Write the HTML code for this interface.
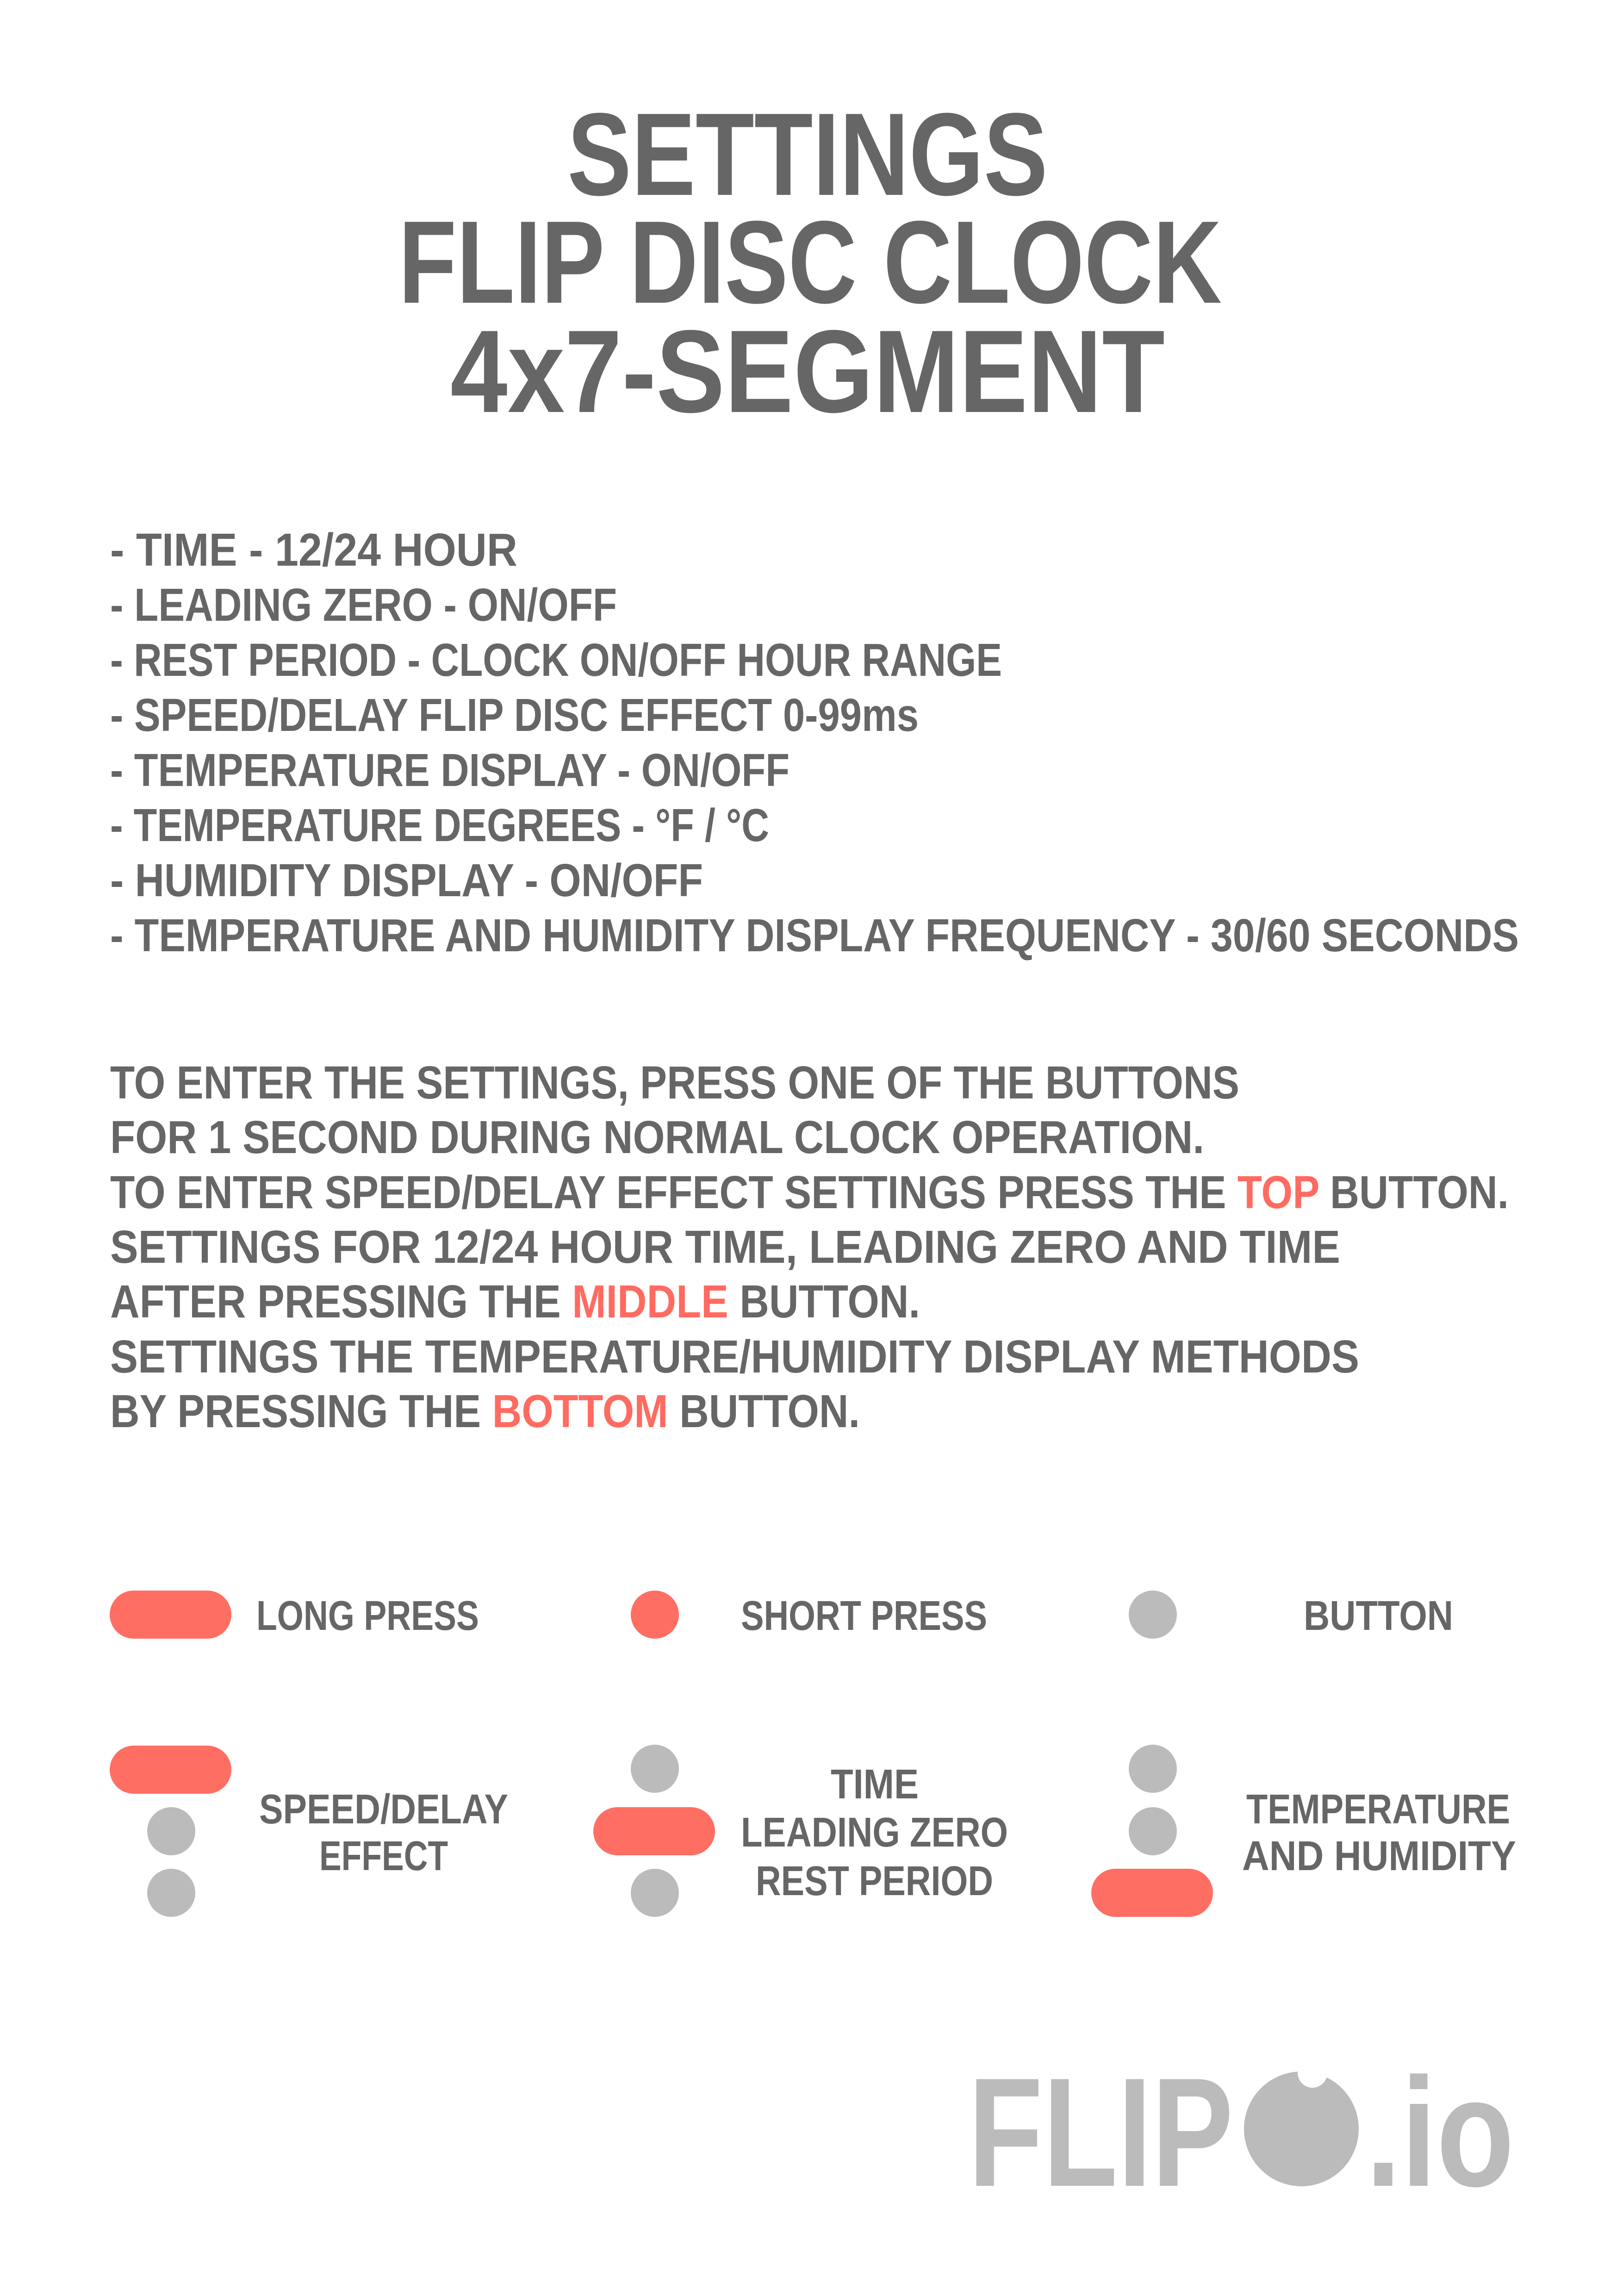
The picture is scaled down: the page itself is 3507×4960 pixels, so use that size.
<!DOCTYPE html>
<html><head><meta charset="utf-8"><style>html,body{margin:0;padding:0;background:#fff}svg{display:block}</style></head>
<body>
<svg xmlns="http://www.w3.org/2000/svg" width="3507" height="4960" viewBox="0 0 3507 4960">
<rect width="3507" height="4960" fill="#fff"/>
<g font-family="Liberation Sans, sans-serif" font-weight="bold" fill="#666666">
<text x="1226" y="421" font-size="254" textLength="1038" lengthAdjust="spacingAndGlyphs">SETTINGS</text>
<text x="861" y="654" font-size="254" textLength="1779" lengthAdjust="spacingAndGlyphs">FLIP DISC CLOCK</text>
<text x="973" y="890" font-size="254" textLength="1544" lengthAdjust="spacingAndGlyphs">4x7-SEGMENT</text>

<g font-size="100">
<text x="238" y="1222" textLength="880" lengthAdjust="spacingAndGlyphs">- TIME - 12/24 HOUR</text>
<text x="238" y="1341" textLength="1095" lengthAdjust="spacingAndGlyphs">- LEADING ZERO - ON/OFF</text>
<text x="238" y="1460" textLength="1927" lengthAdjust="spacingAndGlyphs">- REST PERIOD - CLOCK ON/OFF HOUR RANGE</text>
<text x="238" y="1579" textLength="1747" lengthAdjust="spacingAndGlyphs">- SPEED/DELAY FLIP DISC EFFECT 0-99ms</text>
<text x="238" y="1698" textLength="1468" lengthAdjust="spacingAndGlyphs">- TEMPERATURE DISPLAY - ON/OFF</text>
<text x="238" y="1817" textLength="1424" lengthAdjust="spacingAndGlyphs">- TEMPERATURE DEGREES - °F / °C</text>
<text x="238" y="1936" textLength="1281" lengthAdjust="spacingAndGlyphs">- HUMIDITY DISPLAY - ON/OFF</text>
<text x="238" y="2055" textLength="3044" lengthAdjust="spacingAndGlyphs">- TEMPERATURE AND HUMIDITY DISPLAY FREQUENCY - 30/60 SECONDS</text>

<text x="238" y="2373" textLength="2440" lengthAdjust="spacingAndGlyphs">TO ENTER THE SETTINGS, PRESS ONE OF THE BUTTONS</text>
<text x="238" y="2491" textLength="2364" lengthAdjust="spacingAndGlyphs">FOR 1 SECOND DURING NORMAL CLOCK OPERATION.</text>
<text x="238" y="2610" textLength="3022" lengthAdjust="spacingAndGlyphs">TO ENTER SPEED/DELAY EFFECT SETTINGS PRESS THE <tspan fill="#FF6B61">TOP</tspan> BUTTON.</text>
<text x="238" y="2728" textLength="2658" lengthAdjust="spacingAndGlyphs">SETTINGS FOR 12/24 HOUR TIME, LEADING ZERO AND TIME</text>
<text x="238" y="2846" textLength="1750" lengthAdjust="spacingAndGlyphs">AFTER PRESSING THE <tspan fill="#FF6B61">MIDDLE</tspan> BUTTON.</text>
<text x="238" y="2965" textLength="2699" lengthAdjust="spacingAndGlyphs">SETTINGS THE TEMPERATURE/HUMIDITY DISPLAY METHODS</text>
<text x="238" y="3083" textLength="1620" lengthAdjust="spacingAndGlyphs">BY PRESSING THE <tspan fill="#FF6B61">BOTTOM</tspan> BUTTON.</text>
</g>

<g font-size="90">
<text x="554" y="3521" textLength="481" lengthAdjust="spacingAndGlyphs">LONG PRESS</text>
<text x="1601" y="3521" textLength="532" lengthAdjust="spacingAndGlyphs">SHORT PRESS</text>
<text x="2817" y="3521" textLength="323" lengthAdjust="spacingAndGlyphs">BUTTON</text>
<text x="560" y="3939" textLength="538" lengthAdjust="spacingAndGlyphs">SPEED/DELAY</text>
<text x="690" y="4040" textLength="278" lengthAdjust="spacingAndGlyphs">EFFECT</text>
<text x="1795" y="3885" textLength="190" lengthAdjust="spacingAndGlyphs">TIME</text>
<text x="1601" y="3989" textLength="577" lengthAdjust="spacingAndGlyphs">LEADING ZERO</text>
<text x="1633" y="4094" textLength="513" lengthAdjust="spacingAndGlyphs">REST PERIOD</text>
<text x="2693" y="3939" textLength="570" lengthAdjust="spacingAndGlyphs">TEMPERATURE</text>
<text x="2684" y="4040" textLength="592" lengthAdjust="spacingAndGlyphs">AND HUMIDITY</text>
</g>
</g>

<!-- legend shapes -->
<rect x="237" y="3436" width="263" height="104" rx="52" fill="#FF6E63"/>
<circle cx="1415" cy="3488" r="52" fill="#FF6E63"/>
<circle cx="2491" cy="3488" r="52" fill="#BBBBBB"/>

<rect x="237" y="3771" width="263" height="104" rx="52" fill="#FF6E63"/>
<circle cx="370" cy="3956" r="52" fill="#BBBBBB"/>
<circle cx="370" cy="4089" r="52" fill="#BBBBBB"/>

<circle cx="1415" cy="3821" r="52" fill="#BBBBBB"/>
<rect x="1282" y="3904" width="263" height="104" rx="52" fill="#FF6E63"/>
<circle cx="1415" cy="4089" r="52" fill="#BBBBBB"/>

<circle cx="2491" cy="3821" r="52" fill="#BBBBBB"/>
<circle cx="2491" cy="3956" r="52" fill="#BBBBBB"/>
<rect x="2358" y="4037" width="263" height="104" rx="52" fill="#FF6E63"/>

<!-- logo -->
<g fill="#BBBBBB" font-family="Liberation Sans, sans-serif" font-weight="bold" font-size="335">
<text x="2092" y="4722" textLength="573" lengthAdjust="spacingAndGlyphs">FLIP</text>
<text x="2951" y="4722" textLength="321" lengthAdjust="spacingAndGlyphs">.io</text>
</g>
<circle cx="2812" cy="4599" r="124" fill="#BBBBBB"/>
<circle cx="2836" cy="4478" r="32" fill="#fff"/>
</svg>
</body></html>
